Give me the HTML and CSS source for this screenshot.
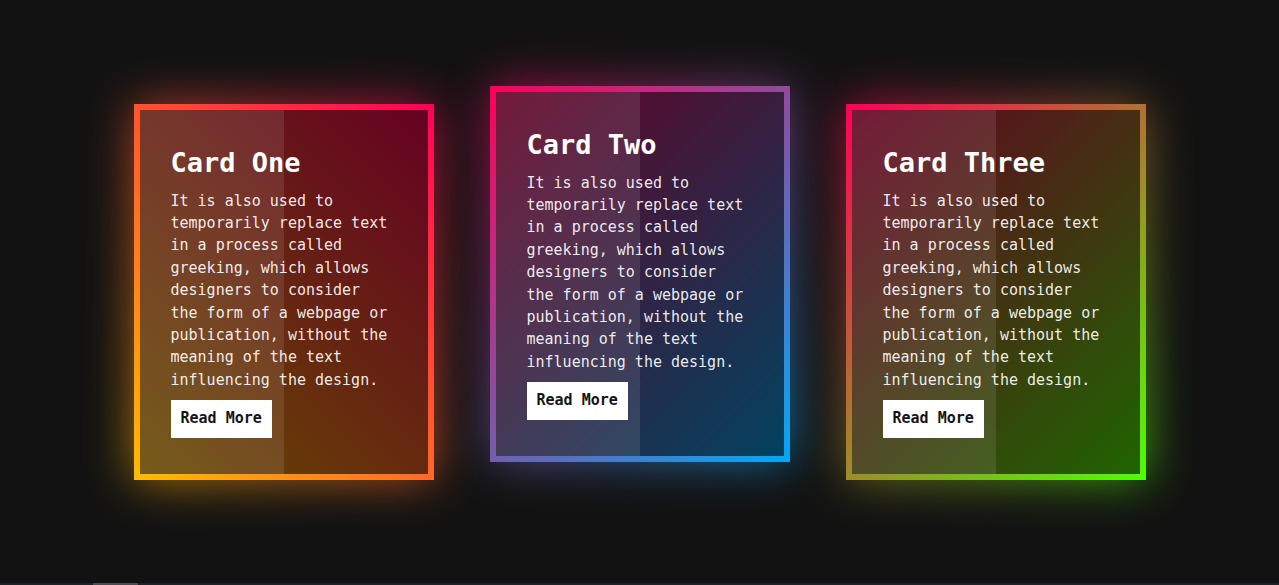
FILE: index.html
```html
<!DOCTYPE html>
<html lang="en">
<head>
<meta charset="utf-8">
<title>Glowing Cards</title>
<link rel="stylesheet" href="styles.css">
</head>
<body>
  <main class="stage">
    <div class="card card-one">
      <div class="content">
        <h2 class="title">Card One</h2>
        <p class="text">It is also used to temporarily replace text in a process called greeking, which allows designers to consider the form of a webpage or publication, without the meaning of the text influencing the design.</p>
        <a class="btn" href="#">Read More</a>
      </div>
    </div>
    <div class="card card-two">
      <div class="content">
        <h2 class="title">Card Two</h2>
        <p class="text">It is also used to temporarily replace text in a process called greeking, which allows designers to consider the form of a webpage or publication, without the meaning of the text influencing the design.</p>
        <a class="btn" href="#">Read More</a>
      </div>
    </div>
    <div class="card card-three">
      <div class="content">
        <h2 class="title">Card Three</h2>
        <p class="text">It is also used to temporarily replace text in a process called greeking, which allows designers to consider the form of a webpage or publication, without the meaning of the text influencing the design.</p>
        <a class="btn" href="#">Read More</a>
      </div>
    </div>
  </main>
  <footer class="strip"><span class="strip-thumb"></span></footer>
</body>
</html>
```

FILE: styles.css
```css
* {
  box-sizing: border-box;
}

html,
body {
  margin: 0;
  height: 100%;
}

body {
  background: #121212;
  font-family: "DejaVu Sans Mono", "Liberation Mono", monospace;
  display: flex;
  flex-direction: column;
  overflow: hidden;
}

.stage {
  flex: 1;
  display: flex;
  justify-content: center;
  align-items: center;
  gap: 56px;
}

.card {
  position: relative;
  width: 300px;
  height: 376px;
  padding: 6px;
  display: flex;
}

.card::after {
  content: "";
  position: absolute;
  inset: 0;
  background: inherit;
  filter: blur(24px);
  opacity: 0.65;
  z-index: -1;
}

.card-one {
  background: linear-gradient(45deg, #ffbc00, #ff0058);
}

.card-two {
  background: linear-gradient(135deg, #ff0058, #03a9f4);
  margin-bottom: 36px;
}

.card-three {
  background: linear-gradient(135deg, #ff0058, #4dff03);
}

.content {
  position: relative;
  flex: 1;
  background: rgba(0, 0, 0, 0.6);
  padding: 37px 37px 30px 31px;
  display: flex;
  flex-direction: column;
  align-items: flex-start;
}

.content::before {
  content: "";
  position: absolute;
  top: 0;
  left: 0;
  width: 50%;
  height: 100%;
  background: rgba(255, 255, 255, 0.1);
  pointer-events: none;
}

.title {
  position: relative;
  margin: 0 0 11px;
  font-size: 27px;
  line-height: 32px;
  font-weight: 700;
  color: #fff;
}

.text {
  position: relative;
  margin: 0 0 9px;
  font-size: 15px;
  line-height: 22.4px;
  color: rgba(255, 255, 255, 0.92);
}

.btn {
  position: relative;
  display: inline-block;
  background: #fff;
  color: #151515;
  text-decoration: none;
  font-size: 15px;
  font-weight: 700;
  line-height: 17px;
  padding: 10px 10px 11px;
}

.strip {
  height: 2px;
  background: #1b2231;
  display: flex;
  padding-left: 93px;
}

.strip-thumb {
  width: 45px;
  height: 2px;
  background: #4a4c52;
}
```
